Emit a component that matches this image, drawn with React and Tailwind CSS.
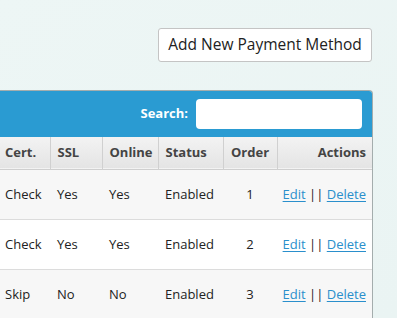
export default function App() {
  const rows = [
    { cert: "Check", ssl: "Yes", online: "Yes", status: "Enabled", order: 1 },
    { cert: "Check", ssl: "Yes", online: "Yes", status: "Enabled", order: 2 },
    { cert: "Skip", ssl: "No", online: "No", status: "Enabled", order: 3 },
  ];

  return (
    <div
      className="min-h-screen bg-gradient-to-br from-[#edf6f5] to-[#eaf4f3] text-[#222] overflow-hidden"
      style={{ fontFamily: '"Open Sans", "Liberation Sans", sans-serif' }}
    >
      {/* Toolbar */}
      <div className="flex justify-end pt-[28px] pr-[25px]">
        <button className="h-[34px] w-[214px] bg-white border border-[#c4c4c4] rounded-[3px] text-[15.5px] text-[#222] leading-none">
          Add New Payment Method
        </button>
      </div>

      {/* Panel */}
      <div className="mt-[28px] ml-[-2px] w-[375px] border-t border-r border-[#a4adad] rounded-tr-[4px] overflow-hidden">
        <div className="h-[46px] bg-[#2a9bd2] flex items-center justify-end pr-[10px] gap-[8px]">
          <label className="text-white font-bold text-[13px]">Search:</label>
          <input className="h-[30px] w-[166px] bg-white rounded-[4px] outline-none" />
        </div>

        <table className="w-full border-collapse text-[13px] table-fixed">
          <colgroup>
            <col className="w-[52px]" />
            <col className="w-[52px]" />
            <col className="w-[56px]" />
            <col className="w-[65px]" />
            <col className="w-[54px]" />
            <col />
          </colgroup>
          <thead>
            <tr className="h-[32px] bg-gradient-to-b from-[#f3f3f3] to-[#e4e4e4] text-[#444] font-bold border-b border-[#cfcfcf]">
              <th className="text-left pl-[7px] border-r border-[#d0d0d0]">Cert.</th>
              <th className="text-left pl-[7px] border-r border-[#d0d0d0]">SSL</th>
              <th className="text-left pl-[7px] border-r border-[#d0d0d0]">Online</th>
              <th className="text-left pl-[7px] border-r border-[#d0d0d0]">Status</th>
              <th className="text-center border-r border-[#d0d0d0]">Order</th>
              <th className="text-right pr-[6px]">Actions</th>
            </tr>
          </thead>
          <tbody>
            {rows.map((r, i) => (
              <tr
                key={i}
                className={`h-[50px] border-b border-[#dcdcdc] ${i % 2 === 0 ? "bg-[#f7f7f7]" : "bg-white"}`}
              >
                <td className="pl-[7px] pt-[2px]">{r.cert}</td>
                <td className="pl-[7px] pt-[2px]">{r.ssl}</td>
                <td className="pl-[7px] pt-[2px]">{r.online}</td>
                <td className="pl-[7px] pt-[2px]">{r.status}</td>
                <td className="text-center pt-[2px]">{r.order}</td>
                <td className="text-right pr-[6px] pt-[2px]">
                  <a href="#" className="text-[#2a8fcc] underline underline-offset-2">Edit</a>
                  {" || "}
                  <a href="#" className="text-[#2a8fcc] underline underline-offset-2">Delete</a>
                </td>
              </tr>
            ))}
          </tbody>
        </table>
      </div>
    </div>
  );
}
